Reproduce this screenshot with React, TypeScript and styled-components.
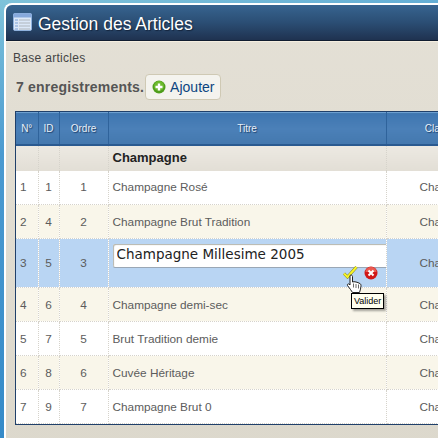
import { createGlobalStyle, styled } from 'styled-components'

const Global = createGlobalStyle`
  html, body {
    margin: 0;
    width: 438px;
    height: 438px;
    overflow: hidden;
  }
`

const Page = styled.div`
  position: relative;
  width: 438px;
  height: 438px;
  overflow: hidden;
  padding: 3px 0 0 4px;
  box-sizing: border-box;
  opacity: 0.999;
  background: linear-gradient(170deg, #7fc3da 0%, #4b9ad0 30%, #2f86c6 100%);
  font-family: 'Liberation Sans', Arial, sans-serif;
`
const Panel = styled.div`
  width: 470px;
  height: 460px;
  border-top: 2px solid #fff;
  border-left: 2px solid #fff;
  border-top-left-radius: 8px;
  overflow: hidden;
  background: linear-gradient(180deg, #e4e0d6 0%, #e2ded3 25%, #dcd8cc 100%);
`
const Header = styled.div`
  height: 36px;
  display: flex;
  align-items: center;
  gap: 5px;
  padding: 0 0 0 7px;
  box-sizing: border-box;
  background: linear-gradient(180deg, #376490 0%, #2b4e74 50%, #1f3250 100%);
  border-bottom: 1px solid #101c30;
  box-shadow: 0 1px 0 #f5eee0;
`
const Title = styled.h1`
  margin: 0;
  padding-top: 4px;
  font-size: 17.5px;
  font-weight: 400;
  color: #fff;
  text-shadow: 1px 1px 1px #14243c;
`
const Content = styled.div`
  padding: 10px 0 0 9px;
`
const Crumb = styled.div`
  margin-left: -2px;
  font-size: 12px;
  line-height: 14px;
  color: #444;
  letter-spacing: 0.3px;
`
const CountRow = styled.div`
  display: flex;
  align-items: center;
  margin: 9px 0 0 1px;
  height: 26px;
`
const Count = styled.span`
  font-size: 14px;
  font-weight: 700;
  letter-spacing: 0.2px;
  color: #555;
`
const AddButton = styled.button`
  display: flex;
  align-items: center;
  gap: 4px;
  height: 26px;
  margin-left: 1px;
  padding: 0 6px;
  box-sizing: border-box;
  border: 1px solid #cfc9b4;
  border-radius: 4px;
  background: #f4f3ee;
  font-family: inherit;
  font-size: 14px;
  color: #0c4580;
`
const TableFrame = styled.div`
  margin: 11px 0 0 0;
  border: 1px solid #20406a;
  border-right: 0;
  background: #fff;
`
const Grid = styled.table`
  border-collapse: collapse;
  table-layout: fixed;
  width: 478px;
`
const Head = styled.th<{ $w: number }>`
  width: ${(p) => p.$w}px;
  height: 32px;
  padding: 0;
  box-sizing: border-box;
  font-size: 10px;
  font-weight: 400;
  color: #e8f0f8;
  text-shadow: 1px 1px 1px #1c3e68;
  text-align: center;
  background: linear-gradient(180deg, #3f76b0 0%, #4b80b8 50%, #4478ae 100%);
  border-right: 1px solid #2f639b;
  border-top: 1px solid #6ea0d0;
  border-bottom: 2px solid #2a5a90;
`
const GroupCell = styled.td`
  height: 26px;
  padding: 0 4px 2px;
  box-sizing: border-box;
  font-size: 13px;
  font-weight: 700;
  color: #222;
  background: linear-gradient(180deg, #ece9e2 0%, #e2ded5 100%);
  border-right: 1px dotted #d6d3cb;
`
const Row = styled.tr<{ $tone: 'white' | 'cream' | 'edit' }>`
  background: ${(p) => (p.$tone === 'white' ? '#fff' : p.$tone === 'cream' ? '#f9f6ea' : '#b9d5f3')};
`
const Cell = styled.td<{ $align?: 'left' | 'center'; $tall?: boolean; $indent?: number }>`
  height: ${(p) => (p.$tall ? 49 : 34)}px;
  padding: 0 0 0 ${(p) => p.$indent ?? 4}px;
  box-sizing: border-box;
  font-size: 11.8px;
  color: #5c5c5c;
  white-space: nowrap;
  overflow: hidden;
  text-align: ${(p) => p.$align ?? 'left'};
  border-right: 1px dotted #d6d3cb;
  border-bottom: 1px dotted #d6d3cb;
`
const EditWrap = styled.div`
  display: flex;
  flex-direction: column;
  height: 45px;
  box-sizing: border-box;
  padding-top: 3px;
`
const EditInput = styled.input`
  width: 275px;
  height: 23px;
  padding: 0 4px 2px;
  box-sizing: border-box;
  border: 0;
  border-radius: 2px;
  background: #fff;
  box-shadow: inset 1px 1px 1px #b5b5ac, 0 1px 0 #9aa7b5;
  font-family: 'DejaVu Sans', Verdana, sans-serif;
  font-size: 13.5px;
  color: #222;
`
const EditActions = styled.div`
  display: flex;
  justify-content: flex-end;
  align-items: flex-start;
  gap: 6px;
  width: 265px;
  margin-top: -1px;
`
const Tooltip = styled.div`
  position: absolute;
  left: 351px;
  top: 293px;
  height: 14px;
  padding: 0 2px;
  border: 1px solid #000;
  background: #fffff0;
  box-shadow: 2px 2px 2px rgba(0, 0, 0, 0.35);
  font-size: 9px;
  line-height: 14px;
  color: #000;
`
const Cursor = styled.svg`
  position: absolute;
  left: 346px;
  top: 274px;
`

const rows: { n: number; id: number; title: string }[] = [
  { n: 1, id: 1, title: 'Champagne Rosé' },
  { n: 2, id: 4, title: 'Champagne Brut Tradition' },
  { n: 3, id: 5, title: '' },
  { n: 4, id: 6, title: 'Champagne demi-sec' },
  { n: 5, id: 7, title: 'Brut Tradition demie' },
  { n: 6, id: 8, title: 'Cuvée Héritage' },
  { n: 7, id: 9, title: 'Champagne Brut 0' }
]

const App = () => {
  return (
    <Page>
      <Global />
      <Panel>
        <Header>
          <svg width="20" height="20" viewBox="0 0 20 20">
            <rect x="0.5" y="0.5" width="18" height="17" rx="1.5" fill="#dbe8f8" stroke="#8fb2de" />
            <rect x="0.5" y="0.5" width="18" height="4" fill="#86a9dc" />
            <path d="M2 7h3M2 10h3M2 13h3M2 16h3" stroke="#9cb8e0" strokeWidth="1.5" />
            <path d="M6 7h11M6 10h11M6 13h11M6 16h11" stroke="#bfc6cf" strokeWidth="1.5" />
          </svg>
          <Title>Gestion des Articles</Title>
        </Header>
        <Content>
          <Crumb>Base articles</Crumb>
          <CountRow>
            <Count>7 enregistrements.</Count>
            <AddButton>
              <svg width="14" height="14" viewBox="0 0 14 14">
                <circle cx="7" cy="7" r="6.5" fill="#4f9e1c" />
                <circle cx="7" cy="6" r="5" fill="#6cba2c" />
                <path d="M3.500 7h7M7 3.500v7" stroke="#fff" strokeWidth="2.4" />
              </svg>
              Ajouter
            </AddButton>
          </CountRow>
          <TableFrame>
            <Grid>
              <thead>
                <tr>
                  <Head $w={22}>N°</Head>
                  <Head $w={21}>ID</Head>
                  <Head $w={49}>Ordre</Head>
                  <Head $w={278}>Titre</Head>
                  <Head $w={108}>Classe</Head>
                </tr>
              </thead>
              <tbody>
                <tr>
                  <GroupCell />
                  <GroupCell />
                  <GroupCell />
                  <GroupCell>Champagne</GroupCell>
                  <GroupCell />
                </tr>
                {rows.map((r) => {
                  const editing = r.n === 3
                  const tone = editing ? 'edit' : r.n % 2 === 0 ? 'cream' : 'white'
                  return (
                    <Row key={r.n} $tone={tone}>
                      <Cell $tall={editing}>{r.n}</Cell>
                      <Cell $tall={editing} $align="center" $indent={0}>{r.id}</Cell>
                      <Cell $tall={editing} $align="center" $indent={0}>{r.n}</Cell>
                      <Cell $tall={editing}>
                        {editing ? (
                          <EditWrap>
                            <EditInput readOnly value="Champagne Millesime 2005" />
                            <EditActions>
                              <svg width="15" height="13" viewBox="0 0 15 13">
                                <path d="M1 7.500l3.500 3.500L13.500 1" fill="none" stroke="#7d8420" strokeWidth="3" />
                                <path d="M1 7.500l3.500 3.500L13.500 1" fill="none" stroke="#f8f428" strokeWidth="2" />
                              </svg>
                              <svg width="14" height="14" viewBox="0 0 14 14">
                                <circle cx="7" cy="7" r="6.500" fill="#d01818" />
                                <path d="M1.500 6a5.500 5 0 0 1 11 0z" fill="#ea5a50" />
                                <path d="M4.500 4.500l5 5M9.500 4.500l-5 5" stroke="#fff" strokeWidth="2" />
                              </svg>
                            </EditActions>
                          </EditWrap>
                        ) : (
                          r.title
                        )}
                      </Cell>
                      <Cell $tall={editing} $indent={33}>Champagne</Cell>
                    </Row>
                  )
                })}
              </tbody>
            </Grid>
          </TableFrame>
        </Content>
      </Panel>
      <Cursor width="17" height="20" viewBox="0 0 17 20">
        <path
          d="M4 1.500c1-.8 2.500-.4 2.500 1V8l1.500-.3 2 .3 2 .6 2 1c1 .6 1 1.500 1 2.500l-.5 3-1 3.400H6.500l-2-3-3-4c-.6-1 .6-2 1.500-1.500L4 11z"
          fill="#fff"
          stroke="#222"
          strokeWidth="1"
        />
        <path d="M7.500 9.500v4M10 10v4M12.500 10.500v4" stroke="#444" strokeWidth="0.8" />
      </Cursor>
      <Tooltip>Valider</Tooltip>
    </Page>
  )
}

export default App
